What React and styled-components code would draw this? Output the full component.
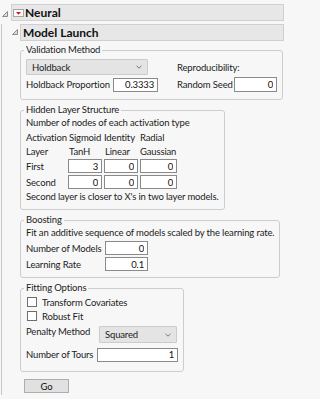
import React from 'react'
import styled, { createGlobalStyle } from 'styled-components'

const GlobalStyle = createGlobalStyle`
  html, body { margin: 0; padding: 0; background: #f7f7f7; }
  body {
    font-family: Lato, "Noto Sans", sans-serif;
    font-size: 9.5px;
    letter-spacing: -0.15px;
    color: #1c1c1c;
  }
  * { box-sizing: border-box; }
`

const Page = styled.div`
  width: 287px;
  height: 399px;
  padding-top: 4px;
  overflow: hidden;
`

const OutlineHead = styled.div`
  display: flex;
  align-items: stretch;
  height: 17px;
  margin-top: ${p => p.$top || 0}px;
  padding-left: ${p => p.$indent}px;
  padding-right: 3px;
`

const Twisty = styled.div`
  width: ${p => p.$w}px;
  flex: none;
  padding-top: ${p => p.$drop}px;
  line-height: 0;
`

const HeadBar = styled.div`
  flex: 1;
  display: flex;
  align-items: center;
  gap: 1px;
  padding-left: ${p => p.$pad}px;
  background: #e7e7e7;
  border: 1px solid #d0d0d0;
`

const HeadTitle = styled.span`
  font-weight: 700;
  font-size: 12px;
  letter-spacing: 0;
  color: #111;
  white-space: nowrap;
`

const OutlineBody = styled.div`
  margin-left: 1px;
  border-left: 1px solid #c8c8c8;
  padding-bottom: 2px;
`

const Launch = styled.div`
  display: flex;
  flex-direction: column;
  align-items: flex-start;
  gap: 4px;
  padding: 3px 0 0 18px;
`

const Group = styled.fieldset`
  margin: 0;
  min-width: 0;
  padding: 0 5px ${p => p.$pb}px 5px;
  border: 1px solid #cdcdcd;
  border-radius: 3px;
  white-space: nowrap;
`

const Legend = styled.legend`
  margin-left: -2px;
  padding: 0 2px;
  line-height: 12px;
  color: #222;
`

const Line = styled.div`
  height: 14px;
  line-height: 14px;
`

const ValidationGrid = styled.div`
  display: grid;
  grid-template-columns: 132px 100px;
  grid-template-rows: 16px 15px;
  column-gap: 19px;
  row-gap: 2px;
  margin-top: 3px;
  align-items: center;
`

const Field = styled.div`
  display: flex;
  align-items: center;
  height: 100%;
`

const Label = styled.span`
  width: ${p => p.$w}px;
  flex: none;
`

const Input = styled.input`
  width: ${p => p.$w}px;
  height: ${p => p.$h || 14}px;
  margin: 0;
  padding: 0 3px 0 0;
  font: inherit;
  letter-spacing: inherit;
  color: #111;
  text-align: right;
  background: #fff;
  border: 1px solid #8a8a8a;
  border-radius: 0;
  outline: none;
`

const Dropdown = styled.div`
  width: ${p => p.$w}px;
  height: ${p => p.$h}px;
  margin-left: ${p => p.$ml || 0}px;
  display: flex;
  align-items: center;
  justify-content: space-between;
  padding: 0 5px 0 5px;
  background: #e4e4e4;
  border: 1px solid #cbcbcb;
  border-radius: 1px;
`

const NodeGrid = styled.div`
  display: grid;
  grid-template-columns: 40px 34px 34px 37px;
  grid-template-rows: 14px 14px 16px 16px;
  column-gap: 2px;
  align-items: center;
`

const Cell = styled.span`
  padding-left: ${p => p.$pl || 0}px;
`

const FormGrid = styled.div`
  display: grid;
  grid-template-columns: ${p => p.$cols};
  grid-auto-rows: ${p => p.$row}px;
  row-gap: ${p => p.$gap || 0}px;
  margin-top: ${p => p.$mt || 0}px;
  align-items: center;
`

const CheckRow = styled.label`
  display: flex;
  align-items: center;
  gap: 5px;
  height: 14px;
  padding-left: 1px;
`

const Box = styled.span`
  width: 10px;
  height: 10px;
  background: #fff;
  border: 1px solid #6e6e6e;
`

const Options = styled.div`
  padding-top: 1px;
`

const TopLabel = styled.span`
  align-self: start;
  line-height: 11px;
`

const GoButton = styled.button`
  width: 45px;
  height: 14px;
  margin: 3px 0 0 4px;
  padding: 0;
  font: inherit;
  letter-spacing: inherit;
  color: #111;
  background: #e1e1e1;
  border: 1px solid #adadad;
  border-radius: 0;
`

const TwistyIcon = () => (
  <svg width="6" height="6" viewBox="0 0 6 6">
    <path d="M5.5 0.5 V5.5 H0.5 Z" fill="#dcdcdc" stroke="#8c8c8c" strokeWidth="1" />
  </svg>
)

const MenuIcon = () => (
  <svg width="11" height="8" viewBox="0 0 11 8">
    <rect x="0.5" y="0.5" width="10" height="7" fill="#fafafa" stroke="#a6a6a6" />
    <path d="M3 3 H8 L5.5 5.8 Z" fill="#d11b1b" />
  </svg>
)

const Chevron = () => (
  <svg width="6" height="4" viewBox="0 0 6 4">
    <path d="M0.5 0.8 L3 3.2 L5.5 0.8" fill="none" stroke="#6a6a6a" strokeWidth="0.9" />
  </svg>
)

const layers = [
  { name: 'First', values: ['3', '0', '0'] },
  { name: 'Second', values: ['0', '0', '0'] },
]

export default function App() {
  return (
    <>
      <GlobalStyle />
      <Page>
        <OutlineHead $indent={2}>
          <Twisty $w={9} $drop={7}><TwistyIcon /></Twisty>
          <HeadBar $pad={1}>
            <MenuIcon />
            <HeadTitle>Neural</HeadTitle>
          </HeadBar>
        </OutlineHead>
        <OutlineBody>
          <OutlineHead $indent={10} $top={3}>
            <Twisty $w={8} $drop={5}><TwistyIcon /></Twisty>
            <HeadBar $pad={2}>
              <HeadTitle>Model Launch</HeadTitle>
            </HeadBar>
          </OutlineHead>
          <Launch>
            <Group $pb={7}>
              <Legend>Validation Method</Legend>
              <ValidationGrid>
                <Dropdown $w={122} $h={16}>
                  <span>Holdback</span>
                  <Chevron />
                </Dropdown>
                <span>Reproducibility:</span>
                <Field>
                  <Label $w={87}>Holdback Proportion</Label>
                  <Input $w={45} readOnly value="0.3333" />
                </Field>
                <Field>
                  <Label $w={57}>Random Seed</Label>
                  <Input $w={43} $h={15} readOnly value="0" />
                </Field>
              </ValidationGrid>
            </Group>

            <Group $pb={5}>
              <Legend>Hidden Layer Structure</Legend>
              <Line>Number of nodes of each activation type</Line>
              <NodeGrid>
                <Cell>Activation</Cell>
                <Cell $pl={1}>Sigmoid</Cell>
                <Cell>Identity</Cell>
                <Cell>Radial</Cell>
                <Cell>Layer</Cell>
                <Cell $pl={1}>TanH</Cell>
                <Cell $pl={1}>Linear</Cell>
                <Cell>Gaussian</Cell>
                {layers.map(layer => (
                  <React.Fragment key={layer.name}>
                    <Cell>{layer.name}</Cell>
                    {layer.values.map((v, i) => (
                      <Input key={i} $w={i === 2 ? 37 : 34} readOnly value={v} />
                    ))}
                  </React.Fragment>
                ))}
              </NodeGrid>
              <Line>Second layer is closer to X's in two layer models.</Line>
            </Group>

            <Group $pb={5}>
              <Legend>Boosting</Legend>
              <Line>Fit an additive sequence of models scaled by the learning rate.</Line>
              <FormGrid $cols="79px 43px" $row={16}>
                <span>Number of Models</span>
                <Input $w={43} readOnly value="0" />
                <span>Learning Rate</span>
                <Input $w={43} readOnly value="0.1" />
              </FormGrid>
            </Group>

            <Group $pb={8}>
              <Legend>Fitting Options</Legend>
              <Options>
                <CheckRow><Box />Transform Covariates</CheckRow>
                <CheckRow><Box />Robust Fit</CheckRow>
              </Options>
              <FormGrid $cols="71px 81px" $row={17} $gap={3} $mt={3}>
                <TopLabel>Penalty Method</TopLabel>
                <Dropdown $w={78} $h={17} $ml={2}>
                  <span>Squared</span>
                  <Chevron />
                </Dropdown>
                <span>Number of Tours</span>
                <Input $w={81} readOnly value="1" />
              </FormGrid>
            </Group>

            <GoButton>Go</GoButton>
          </Launch>
        </OutlineBody>
      </Page>
    </>
  )
}
